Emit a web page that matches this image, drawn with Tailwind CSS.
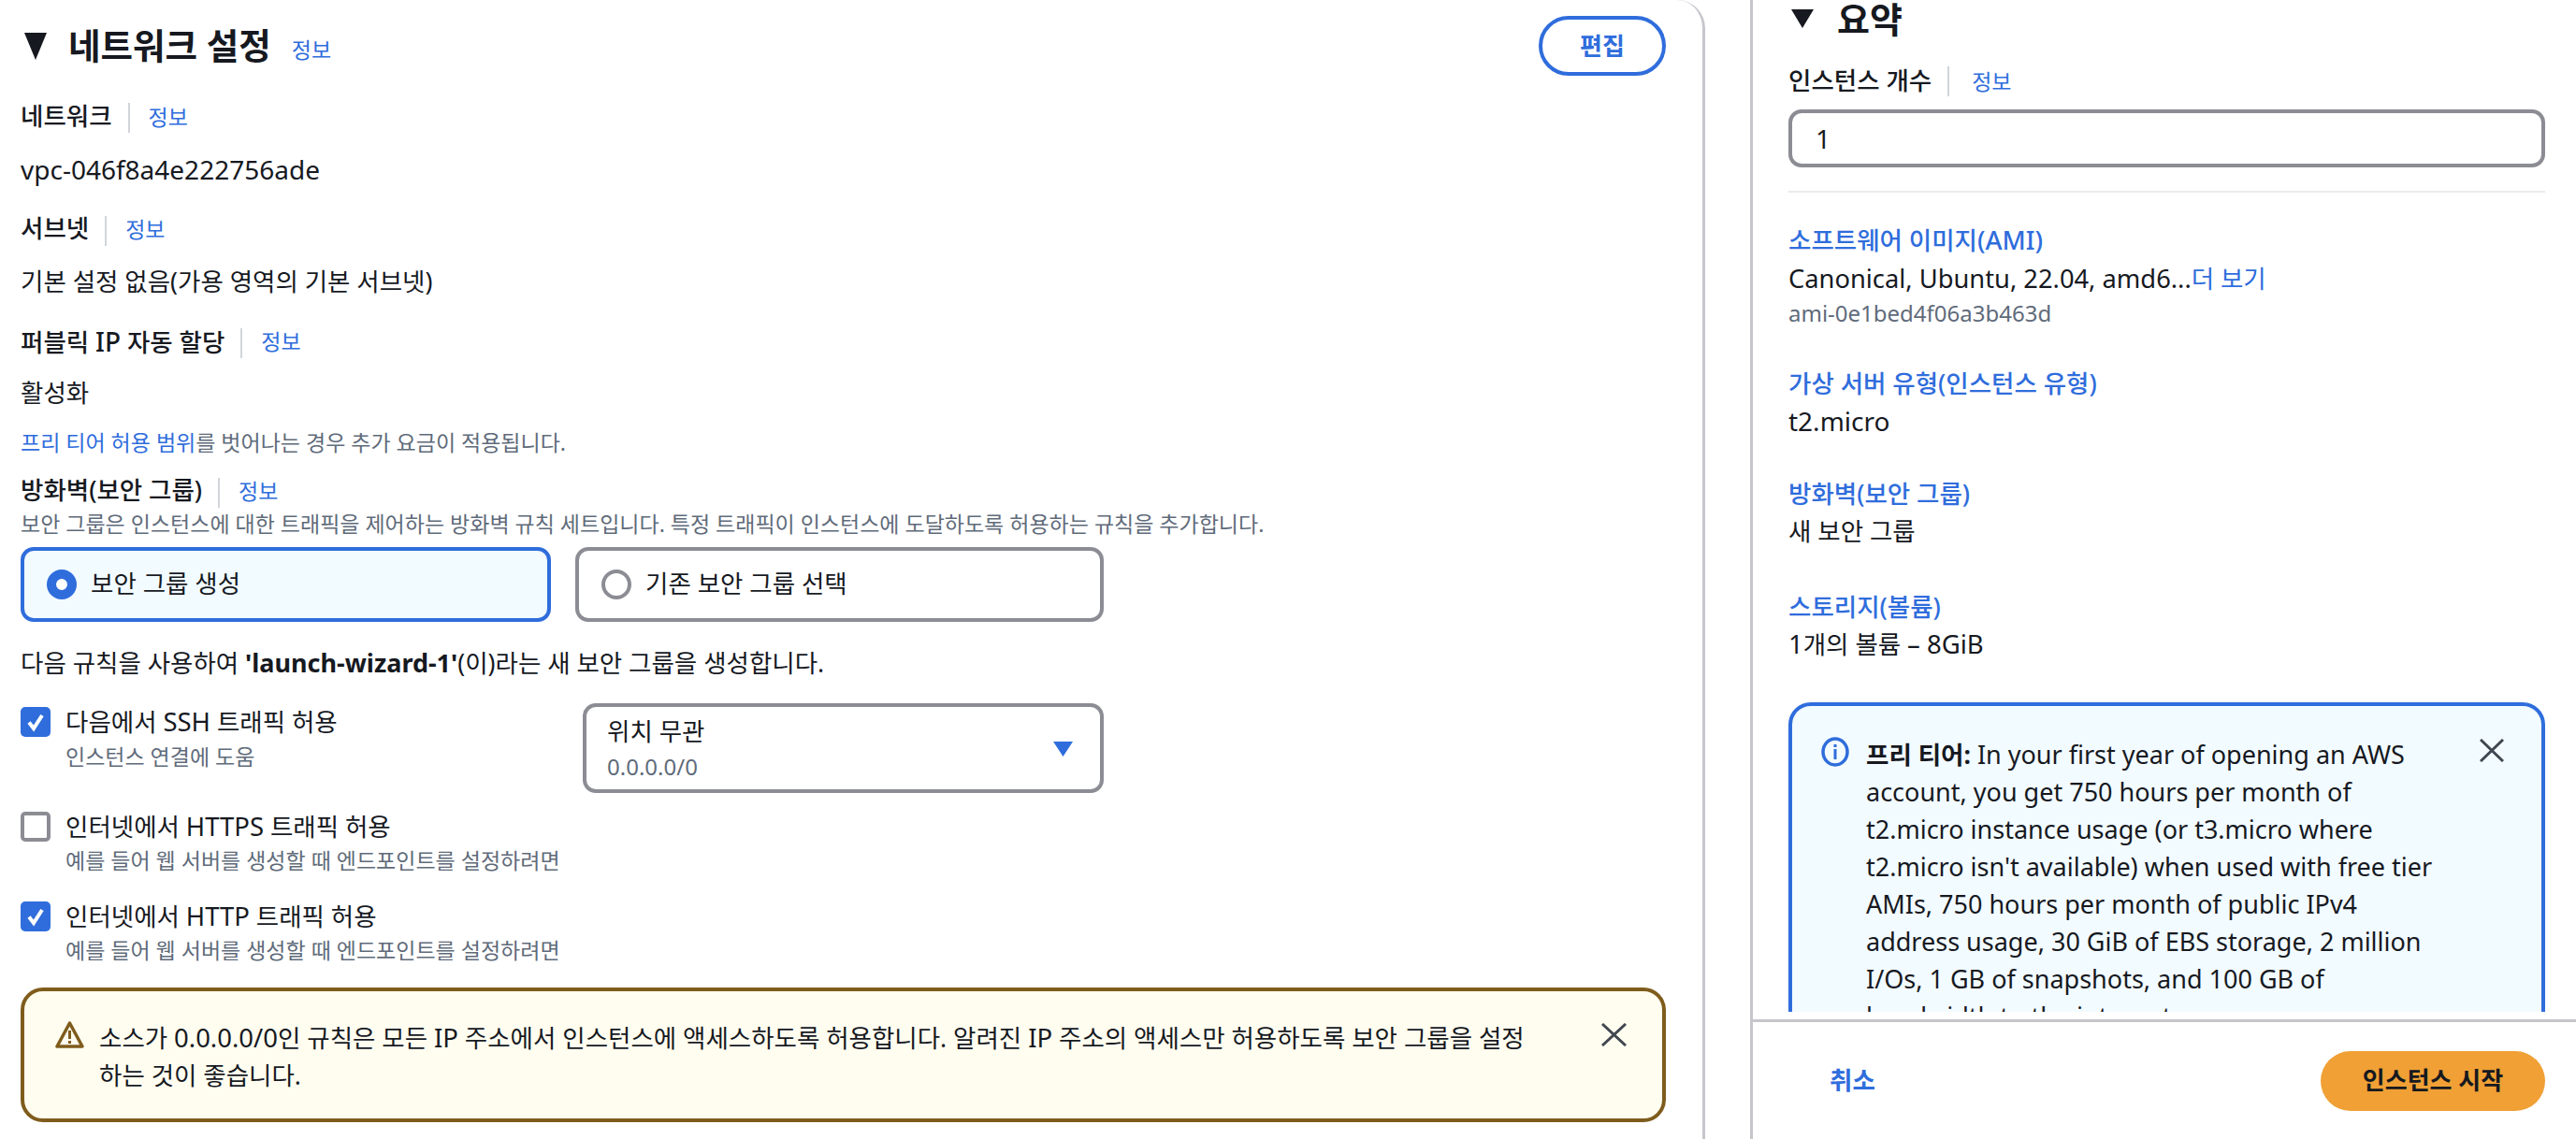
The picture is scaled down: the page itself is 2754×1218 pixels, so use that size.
<!DOCTYPE html>
<html lang="ko">
<head>
    <meta charset="UTF-8">
    <title>인스턴스 시작</title>
    <script src="https://cdn.jsdelivr.net/npm/@tailwindcss/browser@4"></script>
</head>
<body class="h-screen overflow-hidden bg-white font-['Noto_Sans','Noto_Sans_CJK_KR',sans-serif] text-[26.500px] text-[#16191f]">
    <div class="flex h-[1218px]">
        <!-- 네트워크 설정 -->
        <section class="w-[1823px] shrink-0 border-r-[3px] border-[#c6c6cd] rounded-tr-[30px] pl-[22px] pr-[39px] pt-[16px]">
            <div class="flex items-center justify-between h-[66px]">
                <div class="flex items-center">
                    <svg class="w-[26px] h-[30px] ml-[3px] mr-[22px]" viewBox="0 0 26 30"><path d="M1 1h24L13 30z" fill="#16191f"/></svg>
                    <h2 class="text-[37.500px] font-bold leading-none">네트워크 설정</h2>
                    <a class="text-[23px] text-[#2f6ddc] ml-[22px] mt-[8px]">정보</a>
                </div>
                <button class="w-[136px] h-[64px] rounded-full border-[4px] border-[#2f6ddc] text-[#2f6ddc] text-[26px] font-bold">편집</button>
            </div>

            <div class="flex items-center h-[32px] mt-[27px]">
                <span class="font-medium">네트워크</span>
                <span class="h-[32px] border-l-2 border-[#d1d5db] ml-[17px] mr-[20px] mt-[2px]"></span>
                <a class="text-[23px] text-[#2f6ddc]">정보</a>
            </div>
            <div class="h-[40px] leading-[40px] mt-[20px] text-[28px]">vpc-046f8a4e222756ade</div>

            <div class="flex items-center h-[32px] mt-[28px]">
                <span class="font-medium">서브넷</span>
                <span class="h-[32px] border-l-2 border-[#d1d5db] ml-[17px] mr-[20px] mt-[4px]"></span>
                <a class="text-[23px] text-[#2f6ddc]">정보</a>
            </div>
            <div class="h-[40px] leading-[40px] mt-[20px]">기본 설정 없음(가용 영역의 기본 서브넷)</div>

            <div class="flex items-center h-[32px] mt-[28px]">
                <span class="font-medium">퍼블릭 <span class="text-[28px]">IP</span> 자동 할당</span>
                <span class="h-[32px] border-l-2 border-[#d1d5db] ml-[17px] mr-[20px] mt-[4px]"></span>
                <a class="text-[23px] text-[#2f6ddc]">정보</a>
            </div>
            <div class="h-[40px] leading-[40px] mt-[19px]">활성화</div>
            <div class="h-[32px] leading-[32px] mt-[17px] text-[23px] text-[#5f6b7a]"><a class="text-[#2f6ddc]">프리 티어 허용 범위</a>를 벗어나는 경우 추가 요금이 적용됩니다.</div>

            <div class="flex items-center h-[32px] mt-[20px]">
                <span class="font-medium">방화벽(보안 그룹)</span>
                <span class="h-[32px] border-l-2 border-[#d1d5db] ml-[17px] mr-[20px] mt-[4px]"></span>
                <a class="text-[23px] text-[#2f6ddc]">정보</a>
            </div>
            <div class="h-[32px] leading-[32px] mt-[3px] text-[23px] text-[#5f6b7a]">보안 그룹은 인스턴스에 대한 트래픽을 제어하는 방화벽 규칙 세트입니다. 특정 트래픽이 인스턴스에 도달하도록 허용하는 규칙을 추가합니다.</div>

            <div class="flex gap-[26px] mt-[9px]">
                <div class="flex items-center w-[567px] h-[80px] rounded-[14px] border-[4px] border-[#2f6ddc] bg-[#f2fbff] pl-[24px]">
                    <span class="w-[32px] h-[32px] rounded-full border-[10px] border-[#2f6ddc] bg-white"></span>
                    <span class="ml-[15px]">보안 그룹 생성</span>
                </div>
                <div class="flex items-center w-[565px] h-[80px] rounded-[14px] border-[4px] border-[#8c8c94] pl-[24px]">
                    <span class="w-[32px] h-[32px] rounded-full border-[4px] border-[#8c8c94]"></span>
                    <span class="ml-[15px]">기존 보안 그룹 선택</span>
                </div>
            </div>

            <div class="h-[40px] leading-[40px] mt-[24px]">다음 규칙을 사용하여 <b class="font-bold text-[27px]">'launch-wizard-1'</b>(이)라는 새 보안 그룹을 생성합니다.</div>

            <div class="flex justify-between w-[1158px] h-[96px] mt-[23px]">
                <div class="flex mt-[4px]">
                    <svg class="w-[32px] h-[32px] shrink-0" viewBox="0 0 32 32"><rect width="32" height="32" rx="5" fill="#2f6ddc"/><path d="M9 16.500l5 6.500 9-14" fill="none" stroke="#fff" stroke-width="4"/></svg>
                    <div class="ml-[16px]">
                        <div class="h-[32px] leading-[32px]">다음에서 <span class="text-[27.500px]">SSH</span> 트래픽 허용</div>
                        <div class="h-[32px] leading-[32px] mt-[5px] text-[23px] text-[#5f6b7a]">인스턴스 연결에 도움</div>
                    </div>
                </div>
                <div class="flex items-center justify-between w-[557px] h-[96px] rounded-[14px] border-[4px] border-[#8c8c94] pl-[22px] pr-[29px]">
                    <div>
                        <div class="h-[32px] leading-[32px] mt-[2px]">위치 무관</div>
                        <div class="h-[32px] leading-[32px] mt-[6px] text-[24px] text-[#5f6b7a]">0.0.0.0/0</div>
                    </div>
                    <svg class="w-[21px] h-[16px] mt-[2px]" viewBox="0 0 21 16"><path d="M0 0h21L10.500 16z" fill="#2f6ddc"/></svg>
                </div>
            </div>

            <div class="flex mt-[20px]">
                <span class="w-[32px] h-[32px] shrink-0 rounded-[5px] border-[4px] border-[#8c8c94]"></span>
                <div class="ml-[16px]">
                    <div class="h-[32px] leading-[32px]">인터넷에서 <span class="text-[27.500px]">HTTPS</span> 트래픽 허용</div>
                    <div class="h-[32px] leading-[32px] mt-[4px] text-[23px] text-[#5f6b7a]">예를 들어 웹 서버를 생성할 때 엔드포인트를 설정하려면</div>
                </div>
            </div>

            <div class="flex mt-[28px]">
                <svg class="w-[32px] h-[32px] shrink-0" viewBox="0 0 32 32"><rect width="32" height="32" rx="5" fill="#2f6ddc"/><path d="M9 16.500l5 6.500 9-14" fill="none" stroke="#fff" stroke-width="4"/></svg>
                <div class="ml-[16px]">
                    <div class="h-[32px] leading-[32px]">인터넷에서 <span class="text-[27.500px]">HTTP</span> 트래픽 허용</div>
                    <div class="h-[32px] leading-[32px] mt-[4px] text-[23px] text-[#5f6b7a]">예를 들어 웹 서버를 생성할 때 엔드포인트를 설정하려면</div>
                </div>
            </div>

            <div class="flex h-[144px] mt-[24px] rounded-[24px] border-[4px] border-[#7f5c1c] bg-[#fffdf0] pl-[33px] pt-[30px]">
                <svg class="w-[31px] h-[29px] shrink-0 mt-[2px]" viewBox="0 0 31 29"><path d="M15.500 2L2 27h27z" fill="none" stroke="#7f5c1c" stroke-width="3.500" stroke-linejoin="round"/><path d="M15.500 10v9M15.500 21v3" stroke="#7f5c1c" stroke-width="3"/></svg>
                <p class="w-[1530px] ml-[16px] leading-[40px]">소스가 <span class="text-[27.500px]">0.0.0.0/0</span>인 규칙은 모든 <span class="text-[27.500px]">IP</span> 주소에서 인스턴스에 액세스하도록 허용합니다. 알려진 <span class="text-[27.500px]">IP</span> 주소의 액세스만 허용하도록 보안 그룹을 설정<br>하는 것이 좋습니다.</p>
                <svg class="w-[27px] h-[25px] shrink-0 ml-[76px] mt-[4px]" viewBox="0 0 27 25"><path d="M1 1l25 23M26 1L1 24" fill="none" stroke="#414750" stroke-width="3"/></svg>
            </div>
        </section>

        <!-- 요약 -->
        <aside class="relative ml-[48px] flex-1 border-l-[3px] border-[#c6c6cd]">
            <div class="h-[1082px] overflow-hidden pl-[38px] pr-[33px]">
                <div class="flex items-center h-[40px]">
                    <svg class="w-[24px] h-[20px] ml-[3px] mr-[25px]" viewBox="0 0 24 20"><path d="M0 0h24L12 20z" fill="#16191f"/></svg>
                    <h2 class="text-[38px] font-bold leading-none">요약</h2>
                </div>
                <div class="flex items-center h-[32px] mt-[31px]">
                    <span class="font-medium">인스턴스 개수</span>
                    <span class="h-[32px] border-l-2 border-[#d1d5db] ml-[17px] mr-[24px]"></span>
                    <a class="text-[23px] text-[#2f6ddc]">정보</a>
                </div>
                <input class="block w-full h-[62px] mt-[14px] rounded-[14px] border-[4px] border-[#8c8c94] pl-[25px] text-[28px]" value="1">
                <div class="border-t-2 border-[#e9ebed] mt-[25px]"></div>

                <div class="h-[32px] leading-[32px] mt-[35px] font-medium text-[#2f6ddc]">소프트웨어 이미지<span class="text-[27.500px]">(AMI)</span></div>
                <div class="h-[40px] leading-[40px] mt-[5px] text-[27.300px]">Canonical, Ubuntu, 22.04, amd6...<a class="text-[26.500px] text-[#2f6ddc]">더 보기</a></div>
                <div class="h-[32px] leading-[32px] mt-[1px] text-[24px] text-[#5f6b7a]">ami-0e1bed4f06a3b463d</div>

                <div class="h-[32px] leading-[32px] mt-[43px] font-medium text-[#2f6ddc]">가상 서버 유형(인스턴스 유형)</div>
                <div class="h-[40px] leading-[40px] mt-[4px] text-[28px]">t2.micro</div>

                <div class="h-[32px] leading-[32px] mt-[42px] font-medium text-[#2f6ddc]">방화벽(보안 그룹)</div>
                <div class="h-[40px] leading-[40px] mt-[4px]">새 보안 그룹</div>

                <div class="h-[32px] leading-[32px] mt-[45px] font-medium text-[#2f6ddc]">스토리지(볼륨)</div>
                <div class="h-[40px] leading-[40px] mt-[4px]"><span class="text-[27.500px]">1</span>개의 볼륨 <span class="text-[27.500px]">– 8GiB</span></div>

                <div class="flex h-[400px] mt-[42px] rounded-[24px] border-[4px] border-[#2f6ddc] bg-[#f2fbff] pl-[31px] pt-[33px]">
                    <svg class="w-[30px] h-[32px] shrink-0" viewBox="0 0 30 32"><ellipse cx="15" cy="16" rx="13" ry="14" fill="none" stroke="#2f6ddc" stroke-width="3.500"/><path d="M15 13v11M15 8v3" stroke="#2f6ddc" stroke-width="3"/></svg>
                    <p class="w-[626px] ml-[18px] -mt-[1px] leading-[40px] text-[27px] whitespace-nowrap"><b class="font-bold text-[26.500px]">프리 티어:</b> In your first year of opening an AWS<br>account, you get 750 hours per month of<br>t2.micro instance usage (or t3.micro where<br>t2.micro isn't available) when used with free tier<br>AMIs, 750 hours per month of public IPv4<br>address usage, 30 GiB of EBS storage, 2 million<br>I/Os, 1 GB of snapshots, and 100 GB of<br>bandwidth to the internet.</p>
                    <svg class="w-[26px] h-[25px] shrink-0 ml-[30px] mt-[2px]" viewBox="0 0 26 25"><path d="M1 1l24 23M25 1L1 24" fill="none" stroke="#414750" stroke-width="3"/></svg>
                </div>
            </div>
            <div class="flex items-center justify-between h-[136px] pt-[8px]">
                <div class="flex items-center justify-between w-full h-[128px] border-t-[3px] border-[#c6c6cd] pl-[82px] pr-[33px]">
                    <a class="font-bold text-[#2f6ddc]">취소</a>
                    <button class="w-[240px] h-[64px] rounded-full bg-[#f0a035] font-bold text-[26px]">인스턴스 시작</button>
                </div>
            </div>
        </aside>
    </div>
</body>
</html>
